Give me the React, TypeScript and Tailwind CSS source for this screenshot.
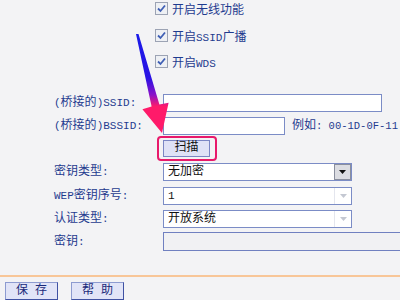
import type { ReactNode } from 'react';

const FONT = '"Liberation Mono", "Noto Sans CJK SC", monospace';

// latin runs are narrower in the reference (half-width bitmap font)
function L({ children }: { children: ReactNode }) {
  return <span className="text-[11px]">{children}</span>;
}

function Check({ label }: { label: ReactNode }) {
  return (
    <div className="flex h-[26.5px] items-start">
      <span className="mt-[2px] flex h-[13px] w-[13px] items-center justify-center border border-[#9ca3b4] bg-[#eef0f4]">
        <svg width="9" height="9" viewBox="0 0 9 9">
          <path d="M1 4.5 L3.5 7 L8 1.5" fill="none" stroke="#3f5fb5" strokeWidth="1.8" />
        </svg>
      </span>
      <span className="ml-[4px] mt-[5px] text-[12px] leading-[12px] text-[#1f3b8f]">{label}</span>
    </div>
  );
}

function Row({ label, top, children }: { label: ReactNode; top: string; children: ReactNode }) {
  return (
    <div className={`flex h-[18px] items-center ${top}`}>
      <div className="w-[163px] shrink-0 whitespace-nowrap pl-[54px] text-[12px] leading-[12px] text-[#1f3b8f]">
        {label}
      </div>
      {children}
    </div>
  );
}

function Select({ value, enabled }: { value: ReactNode; enabled?: boolean }) {
  return (
    <div className="flex h-[18px] w-[189px] shrink-0 items-center border border-[#7b8cc6] bg-white">
      <span className="flex-1 pl-[4px] text-[12px] leading-[12px] text-[#111]">{value}</span>
      {enabled ? (
        <span className="flex h-[16px] w-[17px] items-center justify-center border border-[#8a8f9e] bg-[#dcdde2]">
          <svg width="7" height="4" viewBox="0 0 7 4">
            <path d="M0 0 H7 L3.5 4 Z" fill="#111" />
          </svg>
        </span>
      ) : (
        <span className="flex h-[16px] w-[17px] items-center justify-center border-l border-[#e4e6ee] bg-white">
          <svg width="7" height="4" viewBox="0 0 7 4">
            <path d="M0 0 H7 L3.5 4 Z" fill="#c4c8d2" />
          </svg>
        </span>
      )}
    </div>
  );
}

export default function App() {
  return (
    <div
      className="relative h-[300px] w-[400px] overflow-hidden bg-[#f3f3f5]"
      style={{ fontFamily: FONT }}
    >
      <div className="pl-[155px]">
        <Check label="开启无线功能" />
        <Check label={<>开启<L>SSID</L>广播</>} />
        <Check label={<>开启<L>WDS</L></>} />
      </div>

      <Row label={<><L>(</L>桥接的<L>)SSID:</L></>} top="mt-[14px]">
        <div className="h-[18px] w-[219px] shrink-0 border border-[#7b8cc6] bg-white" />
      </Row>
      <Row label={<><L>(</L>桥接的<L>)BSSID:</L></>} top="mt-[5px]">
        <div className="h-[18px] w-[122px] shrink-0 border border-[#7b8cc6] bg-white" />
        <span className="ml-[7px] whitespace-nowrap text-[12px] leading-[12px] text-[#1f3b8f]">
          例如<span className="text-[10.5px]">: 00-1D-0F-11</span>
        </span>
      </Row>

      <div className="ml-[157px] mt-[1px] h-[25px] w-[60px] rounded-[4px] border-2 border-[#e8196b]">
        <div className="ml-[4px] mt-[2px] flex h-[17px] w-[47px] items-center justify-center border border-[#7a86c4] bg-[#dfe2f6] text-[12px] leading-[12px] text-[#111]">
          扫描
        </div>
      </div>

      <Row label={<>密钥类型<L>:</L></>} top="mt-[2px]">
        <Select value="无加密" enabled />
      </Row>
      <Row label={<><L>WEP</L>密钥序号<L>:</L></>} top="mt-[6px]">
        <Select value={<L>1</L>} />
      </Row>
      <Row label={<>认证类型<L>:</L></>} top="mt-[5px]">
        <Select value="开放系统" />
      </Row>
      <Row label={<>密钥<L>:</L></>} top="mt-[5px]">
        <div className="h-[19px] w-[250px] shrink-0 border border-[#7080c0] bg-[#f1f1f3]" />
      </Row>

      <div className="mt-[24px] h-[2px] w-full bg-[#f8c698]" />

      <div className="mt-[5px] flex gap-[13px] pl-[5px]">
        <div className="flex h-[18px] w-[53px] items-center justify-center border border-[#8d9bd0] border-b-[#3f51a3] border-r-[#3f51a3] bg-[#e1e4f7] text-[12px] leading-[12px] text-[#1a2a7a]">
          保 存
        </div>
        <div className="flex h-[18px] w-[53px] items-center justify-center border border-[#8d9bd0] border-b-[#3f51a3] border-r-[#3f51a3] bg-[#e1e4f7] text-[12px] leading-[12px] text-[#1a2a7a]">
          帮 助
        </div>
      </div>

      {/* annotation arrow */}
      <svg className="pointer-events-none absolute left-0 top-0" width="400" height="300">
        <defs>
          <linearGradient id="arr" x1="0" y1="34" x2="0" y2="132" gradientUnits="userSpaceOnUse">
            <stop offset="0" stopColor="#1a1ae8" />
            <stop offset="0.45" stopColor="#2a12e4" />
            <stop offset="0.62" stopColor="#8a12c8" />
            <stop offset="0.74" stopColor="#ff1a6a" />
            <stop offset="1" stopColor="#ff1a6a" />
          </linearGradient>
        </defs>
        <polygon
          points="136,34 138.5,34 159.4,104.6 168.6,102.8 162,133 142.4,109.2 151.6,106.4"
          fill="url(#arr)"
        />
      </svg>
    </div>
  );
}
